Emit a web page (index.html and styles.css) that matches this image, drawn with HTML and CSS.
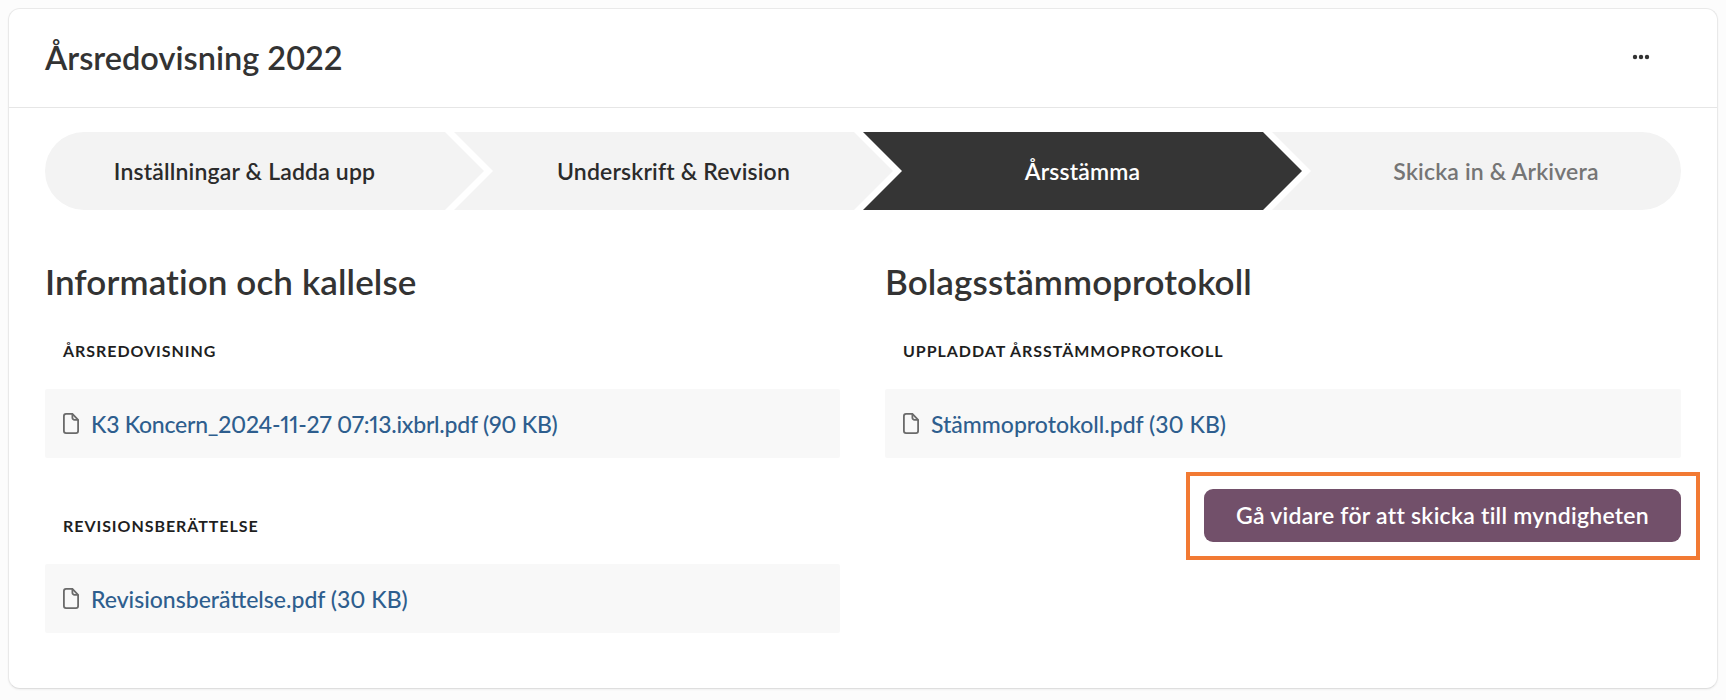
FILE: index.html
```html
<!DOCTYPE html>
<html lang="sv">
<head>
  <meta charset="UTF-8" />
  <title>Årsredovisning 2022</title>
  <link rel="stylesheet" href="styles.css">
</head>
<body>
  <div class="card">
    <div class="card-header">
      <h1>Årsredovisning 2022</h1>
      <svg class="more-icon" width="18" height="6" viewBox="0 0 18 6" aria-hidden="true">
        <circle cx="3" cy="3" r="2.2"/><circle cx="9" cy="3" r="2.2"/><circle cx="15" cy="3" r="2.2"/>
      </svg>
    </div>

    <div class="card-body">
      <div class="steps">
        <div class="step step-first">Inställningar &amp; Ladda upp</div>
        <div class="step">Underskrift &amp; Revision</div>
        <div class="step active">Årsstämma</div>
        <div class="step step-last">Skicka in &amp; Arkivera</div>
      </div>

      <div class="columns">
        <section>
          <h2>Information och kallelse</h2>
          <div class="doc-label">Årsredovisning</div>
          <div class="doc-row">
            <svg class="file-icon" width="16" height="21" viewBox="0 0 16 21" aria-hidden="true">
              <path d="M3 .9h6.4l5.7 5.9V18a2.1 2.1 0 0 1-2.1 2.1H3A2.1 2.1 0 0 1 .9 18V3A2.1 2.1 0 0 1 3 .9Z"/>
              <path d="M9.4.9v3.8a2.1 2.1 0 0 0 2.1 2.1h3.6"/>
            </svg>
            <a href="#" class="link-tight">K3 Koncern_2024-11-27 07:13.ixbrl.pdf (90 KB)</a>
          </div>
          <div class="doc-label">Revisionsberättelse</div>
          <div class="doc-row">
            <svg class="file-icon" width="16" height="21" viewBox="0 0 16 21" aria-hidden="true">
              <path d="M3 .9h6.4l5.7 5.9V18a2.1 2.1 0 0 1-2.1 2.1H3A2.1 2.1 0 0 1 .9 18V3A2.1 2.1 0 0 1 3 .9Z"/>
              <path d="M9.4.9v3.8a2.1 2.1 0 0 0 2.1 2.1h3.6"/>
            </svg>
            <a href="#">Revisionsberättelse.pdf (30 KB)</a>
          </div>
        </section>

        <section>
          <h2>Bolagsstämmoprotokoll</h2>
          <div class="doc-label">Uppladdat årsstämmoprotokoll</div>
          <div class="doc-row">
            <svg class="file-icon" width="16" height="21" viewBox="0 0 16 21" aria-hidden="true">
              <path d="M3 .9h6.4l5.7 5.9V18a2.1 2.1 0 0 1-2.1 2.1H3A2.1 2.1 0 0 1 .9 18V3A2.1 2.1 0 0 1 3 .9Z"/>
              <path d="M9.4.9v3.8a2.1 2.1 0 0 0 2.1 2.1h3.6"/>
            </svg>
            <a href="#">Stämmoprotokoll.pdf (30 KB)</a>
          </div>
          <div class="actions">
            <div class="highlight-wrap">
              <button class="primary-btn">Gå vidare för att skicka till myndigheten</button>
              <div class="highlight"></div>
            </div>
          </div>
        </section>
      </div>
    </div>
  </div>
</body>
</html>
```

FILE: styles.css
```css
* {
  margin: 0;
  padding: 0;
  box-sizing: border-box;
}

html, body {
  height: 100%;
  overflow: hidden;
}

body {
  padding: 8px;
  font-family: 'Lato', sans-serif;
  background-color: #fcfcfc;
  color: #333;
}

.card {
  width: 1710px;
  height: 681px;
  background-color: white;
  border: 1px solid #e9e9e9;
  border-bottom-color: #dedede;
  border-radius: 12px;
  box-shadow: 0 1px 2px rgba(0, 0, 0, 0.05);
}

.card-header {
  display: flex;
  justify-content: space-between;
  align-items: center;
  height: 99px;
  padding: 0 67px 2px 36px;
  border-bottom: 1px solid #e6e6e6;
}

h1 {
  font-size: 32.5px;
  font-weight: 600;
}

.more-icon {
  fill: #333;
}

.card-body {
  padding: 24px 36px 0;
}

.steps {
  display: flex;
  height: 78px;
}

.step {
  flex: 0 0 439px;
  margin-right: -30px;
  display: flex;
  justify-content: center;
  align-items: center;
  background-color: #f3f3f3;
  font-size: 23px;
  font-weight: 600;
  letter-spacing: 0.17px;
  color: #2b2b2b;
  clip-path: polygon(0 0, calc(100% - 39px) 0, 100% 50%, calc(100% - 39px) 100%, 0 100%, 39px 50%);
}

.step-first {
  padding-right: 40px;
  border-radius: 39px 0 0 39px;
  clip-path: polygon(0 0, calc(100% - 39px) 0, 100% 50%, calc(100% - 39px) 100%, 0 100%);
}

.step.active {
  background-color: #353535;
  color: white;
}

.step-last {
  flex: 1;
  margin-right: 0;
  padding-left: 39px;
  border-radius: 0 39px 39px 0;
  color: #757575;
  clip-path: polygon(0 0, 100% 0, 100% 100%, 0 100%, 39px 50%);
}

.columns {
  display: grid;
  grid-template-columns: 795px 796px;
  column-gap: 45px;
  margin-top: 51px;
}

h2 {
  font-size: 35px;
  font-weight: 600;
  line-height: 40px;
  letter-spacing: 0.1px;
  margin-bottom: 40px;
}

.doc-label {
  padding-left: 18px;
  font-size: 16px;
  font-weight: 700;
  line-height: 20px;
  letter-spacing: 0.95px;
  text-transform: uppercase;
  color: #1f1f1f;
  margin-bottom: 28px;
}

.doc-row {
  display: flex;
  align-items: center;
  gap: 12px;
  height: 69px;
  padding-left: 18px;
  background-color: #f8f8f8;
  border-radius: 2px;
  margin-bottom: 58px;
}

.doc-row a {
  font-size: 23px;
  font-weight: 500;
  font-variant-numeric: proportional-nums;
  color: #2e5e8e;
  text-decoration: none;
}

.doc-row a.link-tight {
  letter-spacing: -0.24px;
}

.file-icon {
  flex-shrink: 0;
  fill: none;
  stroke: #6a6a6a;
  stroke-width: 1.8;
}

.actions {
  display: flex;
  justify-content: flex-end;
  margin-top: -27px;
}

.highlight-wrap {
  position: relative;
}

.primary-btn {
  display: block;
  height: 53px;
  padding: 0 32px 2px;
  background-color: #72506a;
  color: white;
  border: none;
  border-radius: 9px;
  font-family: inherit;
  font-size: 23px;
  font-weight: 600;
  letter-spacing: 0.26px;
}

/* orange annotation drawn on top of the screenshot */
.highlight {
  position: absolute;
  top: -17px;
  right: -19px;
  bottom: -18px;
  left: -18px;
  border: 4px solid #f27a33;
}
```
